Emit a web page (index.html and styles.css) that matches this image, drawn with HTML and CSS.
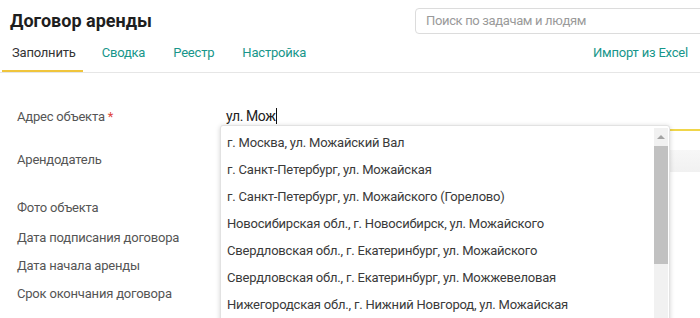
FILE: index.html
```html
<!DOCTYPE html>
<html lang="ru">
<head>
<meta charset="utf-8">
<title>Договор аренды</title>
<link rel="stylesheet" href="styles.css">
</head>
<body>
<div class="page">
  <header class="top">
    <h1 class="title">Договор аренды</h1>
    <div class="search">Поиск по задачам и людям</div>
  </header>
  <nav class="tabs">
    <a class="tab active">Заполнить</a>
    <a class="tab">Сводка</a>
    <a class="tab">Реестр</a>
    <a class="tab">Настройка</a>
    <a class="tab import">Импорт из Excel</a>
  </nav>
  <div class="form">
    <div class="row r1">
      <div class="label">Адрес объекта <span class="req">*</span></div>
      <div class="value">
        <div class="input">ул. Мож<span class="caret"></span></div>
        <div class="dropdown">
          <ul class="list">
            <li>г. Москва, ул. Можайский Вал</li>
            <li>г. Санкт-Петербург, ул. Можайская</li>
            <li>г. Санкт-Петербург, ул. Можайского (Горелово)</li>
            <li>Новосибирская обл., г. Новосибирск, ул. Можайского</li>
            <li>Свердловская обл., г. Екатеринбург, ул. Можайского</li>
            <li>Свердловская обл., г. Екатеринбург, ул. Можжевеловая</li>
            <li>Нижегородская обл., г. Нижний Новгород, ул. Можайская</li>
          </ul>
          <div class="scrollbar">
            <div class="arrow"></div>
            <div class="thumb"></div>
          </div>
        </div>
      </div>
    </div>
    <div class="row r2">
      <div class="label">Арендодатель</div>
      <div class="value"><div class="field"></div></div>
    </div>
    <div class="row r3"><div class="label">Фото объекта</div></div>
    <div class="row r4"><div class="label">Дата подписания договора</div></div>
    <div class="row r5"><div class="label">Дата начала аренды</div></div>
    <div class="row r6"><div class="label">Срок окончания договора</div></div>
  </div>
</div>
</body>
</html>
```
FILE: styles.css
```css
* { box-sizing: border-box; }
html, body { margin: 0; padding: 0; background: #fff; }
body {
  font-family: Roboto, "Noto Sans", Arial, sans-serif;
  font-size: 13px;
  letter-spacing: -0.2px;
  color: #333;
  width: 700px;
  height: 318px;
  overflow: hidden;
}
.page { width: 700px; }
.top {
  display: flex;
  align-items: center;
  justify-content: space-between;
  height: 26px;
  margin-top: 8px;
  padding-left: 10px;
}
.title {
  margin: 0;
  font-size: 18px;
  font-weight: 700;
  letter-spacing: 0;
  color: #1e1e1e;
  line-height: 26px;
}
.search {
  width: 300px;
  height: 26px;
  margin-right: -15px;
  border: 1px solid #dcdcdc;
  border-radius: 4px;
  padding-left: 10px;
  line-height: 24px;
  color: #9a9a9a;
  font-size: 13px;
  letter-spacing: -0.35px;
}
.tabs {
  display: flex;
  height: 37px;
  margin-top: 2px;
  padding-left: 2px;
  border-bottom: 1px solid #e6e6e6;
  gap: 10px;
}
.tab {
  height: 36px;
  padding: 0 9px;
  line-height: 34px;
  border-bottom: 2px solid transparent;
  color: #17968a;
  font-size: 13px;
}
.tab.active {
  padding: 0 7px 0 10px;
  color: #333;
  border-bottom-color: #f0c53c;
}
.tab.import { margin-left: auto; padding-right: 12px; }
.form { padding-top: 30px; }
.row { display: flex; }
.r1 { height: 43px; }
.r2 { height: 48px; }
.r3 { height: 30px; }
.r4 { height: 28px; }
.r5 { height: 28px; }
.r6 { height: 28px; }
.label {
  width: 220px;
  padding-left: 17px;
  line-height: 28px;
  color: #555;
  flex: none;
}
.req { color: #e0463c; }
.value { position: relative; flex: 1; }
.input {
  height: 28px;
  padding-left: 6px;
  line-height: 26px;
  font-size: 14px;
  letter-spacing: -0.4px;
  color: #222;
  border-bottom: 2px solid #f0d64a;
}
.caret {
  display: inline-block;
  width: 1px;
  height: 16px;
  background: #111;
  vertical-align: -3px;
}
.field {
  margin-top: 4px;
  height: 22px;
  background: linear-gradient(#f7f7f7, #f1f1f1);
}
.dropdown {
  position: absolute;
  top: 22px;
  left: 0;
  width: 450px;
  height: 200px;
  display: flex;
  background: #fff;
  border: 1px solid #e2e2e2;
  border-radius: 3px 3px 0 0;
  box-shadow: 0 1px 5px rgba(0, 0, 0, 0.18);
  z-index: 2;
}
.list {
  list-style: none;
  margin: 0;
  padding: 3px 0 0;
  flex: 1;
}
.list li {
  height: 27px;
  line-height: 27px;
  padding-left: 6px;
  color: #3a3a3a;
  white-space: nowrap;
}
.scrollbar {
  width: 14px;
  margin-top: 2px;
  margin-right: 1px;
  background: #f1f1f1;
  display: flex;
  flex-direction: column;
}
.arrow {
  height: 18px;
  position: relative;
}
.arrow::after {
  content: "";
  position: absolute;
  left: 3px;
  top: 7px;
  border-left: 4px solid transparent;
  border-right: 4px solid transparent;
  border-bottom: 4px solid #a3a3a3;
}
.thumb {
  height: 118px;
  background: #c1c1c1;
}
```
